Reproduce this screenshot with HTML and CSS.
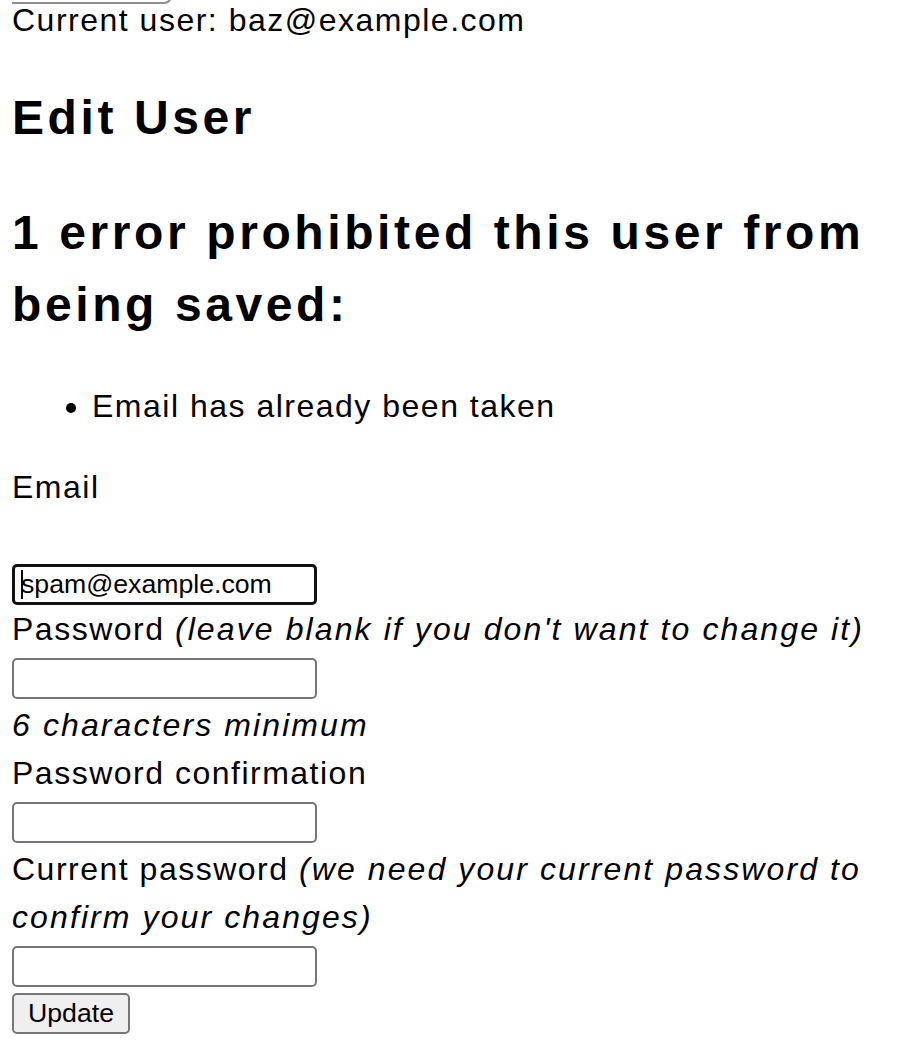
FILE: index.html
```html
<!DOCTYPE html>
<html lang="en">
<head>
    <meta charset="UTF-8">
    <meta name="viewport" content="width=device-width, initial-scale=1.0">
    <title>Edit User</title>
    <link rel="stylesheet" href="styles.css">
</head>
<body>
    <button class="signout" type="button" aria-label="Sign out"></button>
    <p class="current-user">Current user: baz@example.com</p>

    <h2 class="title">Edit User</h2>

    <form class="edit-user" action="#" method="post">
        <div id="error_explanation">
            <h2>1 error prohibited this user from being saved:</h2>
            <ul>
                <li>Email has already been taken</li>
            </ul>
        </div>

        <div class="field">
            <div class="field_with_errors"><label for="user_email">Email</label></div>
            <span class="spacer"></span>
            <div class="field_with_errors caret-wrap">
                <input type="email" id="user_email" class="focused" value="spam@example.com">
                <span class="caret"></span>
            </div>
        </div>

        <div class="field">
            <label for="user_password">Password</label> <i>(leave blank if you don't want to change it)</i>
            <input type="password" id="user_password">
            <em class="hint">6 characters minimum</em>
        </div>

        <div class="field">
            <label for="user_password_confirmation">Password confirmation</label>
            <input type="password" id="user_password_confirmation">
        </div>

        <div class="field">
            <label for="user_current_password">Current password</label> <i>(we need your current password to confirm your changes)</i>
            <input type="password" id="user_current_password">
        </div>

        <div class="actions">
            <input type="submit" value="Update">
        </div>
    </form>
</body>
</html>
```

FILE: styles.css
```css
body {
    font-family: "Liberation Sans", Arial, sans-serif;
    font-size: 32px;
    line-height: 48px;
    letter-spacing: 1.5px;
    color: #000;
    background: #fff;
    margin: 0 12px;
}
.signout {
    display: block;
    width: 184px;
    height: 40px;
    margin: -36px 0 -8px -24px;
    background: #fff;
    border: 2px solid #8d8d8d;
    border-radius: 8px;
}
.current-user {
    margin: 0;
}
h2 {
    font-size: 48px;
    line-height: 72px;
    letter-spacing: 3.6px;
    font-weight: bold;
}
.title {
    margin: 38px 0 0;
}
#error_explanation h2 {
    margin: 43px 0 0;
}
#error_explanation ul {
    margin: 41px 0 33px;
    padding-left: 80px;
}
i, em {
    letter-spacing: 2.1px;
}
.field_with_errors {
    display: block;
}
.spacer {
    display: block;
    height: 48px;
}
.caret-wrap {
    position: relative;
}
.caret {
    position: absolute;
    left: 9px;
    top: 6px;
    width: 2px;
    height: 29px;
    background: #000;
}
input[type="email"],
input[type="password"] {
    display: block;
    box-sizing: border-box;
    width: 305px;
    height: 41px;
    margin: 5px 0 2px;
    padding: 0 7px;
    border: 2px solid #767676;
    border-radius: 5px;
    background: #fff;
    font-family: "Liberation Sans", Arial, sans-serif;
    font-size: 26.67px;
    color: #000;
    outline: none;
}
input.focused {
    margin-bottom: 0;
    border: 3px solid #111;
    padding: 0 6px;
}
.hint {
    display: block;
    height: 48px;
}
.actions input {
    display: block;
    box-sizing: border-box;
    height: 41px;
    margin: 6px 0 0;
    padding: 0 14px;
    border: 2px solid #767676;
    border-radius: 5px;
    background: #efefef;
    font-family: "Liberation Sans", Arial, sans-serif;
    font-size: 26.67px;
    color: #000;
}
```
